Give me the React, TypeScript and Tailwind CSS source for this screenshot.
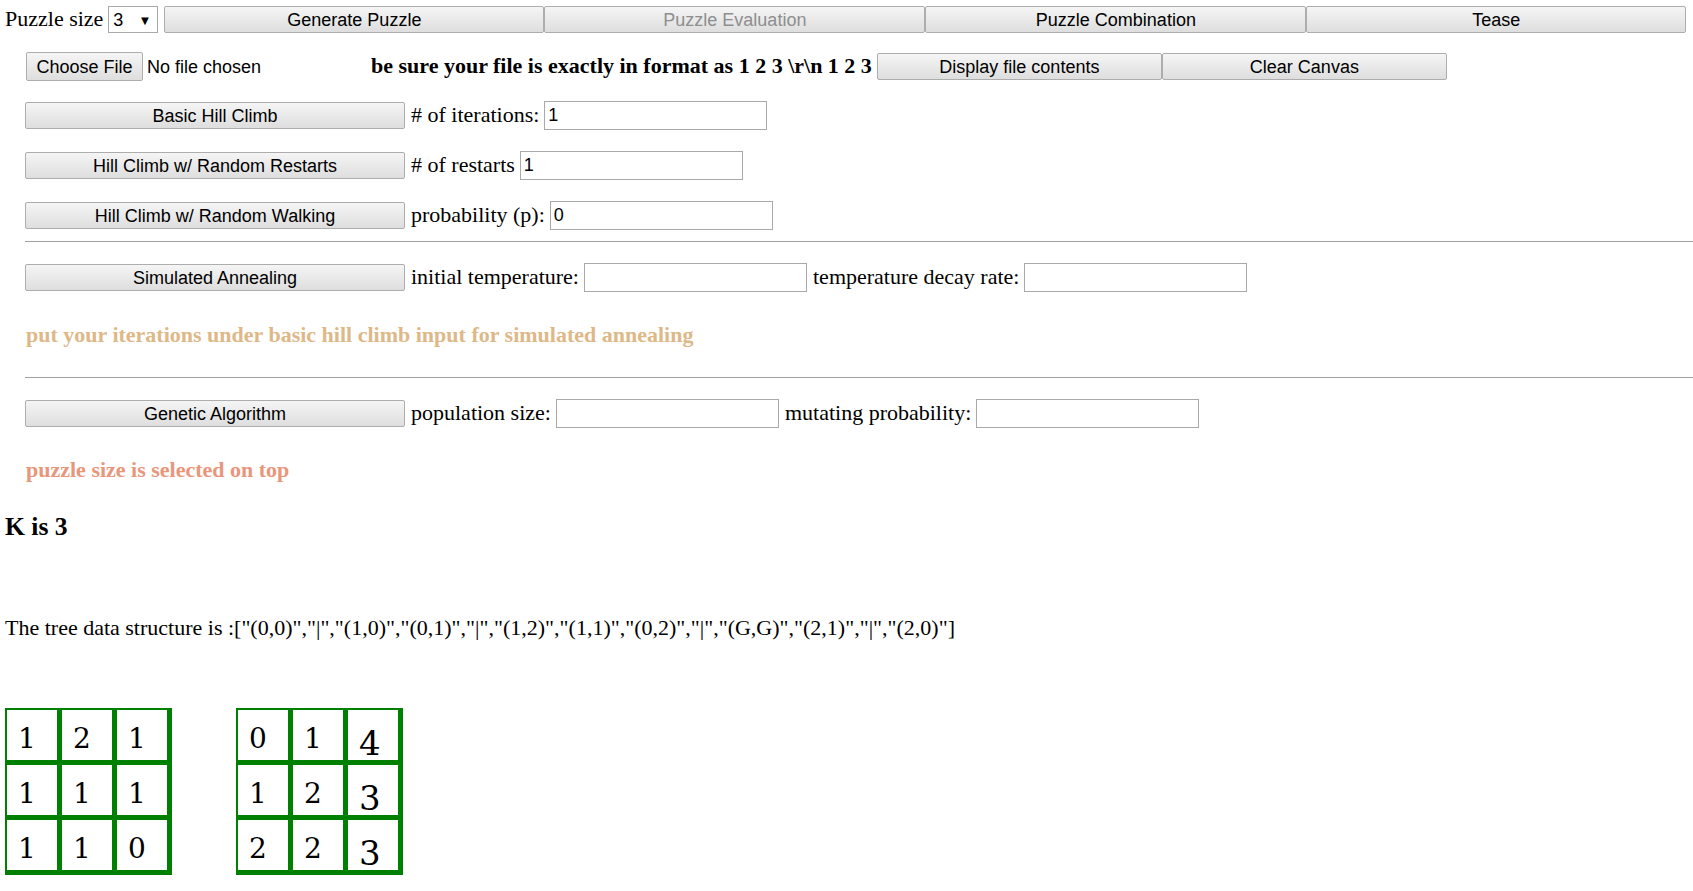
import React from "react";

const btn =
  "h-[27px] pt-[2px] border border-[#adadad] rounded-[2px] bg-gradient-to-b from-[#f5f5f5] to-[#dedede] font-['Liberation_Sans',Arial,sans-serif] text-[18px] leading-none flex items-center justify-center shrink-0";
const input =
  "w-[223px] h-[29px] border border-[#a9a9a9] bg-white px-[3px] font-['Liberation_Sans',Arial,sans-serif] text-[18px] text-black leading-none flex items-center shrink-0";

function Grid({ cells }: { cells: string[] }) {
  return (
    <div className="bg-[#008000] pl-[2px] pt-[2px] pr-[5px] pb-[5px] grid grid-cols-[50px_50px_50px] gap-[5px] w-fit">
      {cells.map((d, i) => {
        const tall = d === "3" || d === "4";
        return (
          <div key={i} className="w-[50px] h-[50px] bg-white relative">
            <span
              className={
                tall
                  ? "absolute left-[11px] top-[16px] text-[34px] leading-none font-['DejaVu_Serif',serif]"
                  : "absolute left-[11px] top-[15px] text-[28px] leading-none font-['DejaVu_Serif',serif]"
              }
            >
              {d}
            </span>
          </div>
        );
      })}
    </div>
  );
}

export default function App() {
  const tree =
    'The tree data structure is :["(0,0)","|","(1,0)","(0,1)","|","(1,2)","(1,1)","(0,2)","|","(G,G)","(2,1)","|","(2,0)"]';

  return (
    <div className="w-[1693px] h-[891px] overflow-hidden bg-white font-['Liberation_Serif','Times_New_Roman',serif] text-[22px] text-black leading-none">
      {/* top bar */}
      <div className="mt-[4px] h-[30px] pl-[5px] flex items-center">
        <span>Puzzle size</span>
        <div className="ml-[5px] w-[50px] h-[27px] pt-[2px] border border-[#a9a9a9] bg-white flex items-center justify-between px-[4px] font-['Liberation_Sans',Arial,sans-serif] text-[18px]">
          <span>3</span>
          <span className="text-[13px] mr-[2px]">▼</span>
        </div>
        <div className="ml-[6px] flex">
          <div className={`${btn} w-[380px] text-black`}>Generate Puzzle</div>
          <div className={`${btn} w-[381px] text-[#8e8e8e]`}>Puzzle Evaluation</div>
          <div className={`${btn} w-[381px] text-black`}>Puzzle Combination</div>
          <div className={`${btn} w-[380px] text-black`}>Tease</div>
        </div>
      </div>

      {/* file row */}
      <div className="mt-[17px] h-[30px] pl-[26px] flex items-center">
        <div className="w-[345px] flex items-center shrink-0">
          <div className={`${btn} h-[29px] w-[117px] text-black`}>Choose File</div>
          <span className="ml-[4px] pt-[2px] font-['Liberation_Sans',Arial,sans-serif] text-[18px]">No file chosen</span>
        </div>
        <span className="font-bold whitespace-nowrap">be sure your file is exactly in format as 1 2 3 \r\n 1 2 3</span>
        <div className="ml-[5px] flex">
          <div className={`${btn} w-[285px] text-black`}>Display file contents</div>
          <div className={`${btn} w-[285px] text-black`}>Clear Canvas</div>
        </div>
      </div>

      {/* hill climbs */}
      <div className="mt-[19px] h-[30px] pl-[25px] flex items-center">
        <div className={`${btn} w-[380px] text-black`}>Basic Hill Climb</div>
        <span className="ml-[6px]">#&nbsp;of iterations:</span>
        <div className={`${input} ml-[5px]`}>1</div>
      </div>
      <div className="mt-[20px] h-[30px] pl-[25px] flex items-center">
        <div className={`${btn} w-[380px] text-black`}>Hill Climb w/ Random Restarts</div>
        <span className="ml-[6px]">#&nbsp;of restarts</span>
        <div className={`${input} ml-[5px]`}>1</div>
      </div>
      <div className="mt-[20px] h-[30px] pl-[25px] flex items-center">
        <div className={`${btn} w-[380px] text-black`}>Hill Climb w/ Random Walking</div>
        <span className="ml-[6px]">probability (p):</span>
        <div className={`${input} ml-[5px]`}>0</div>
      </div>

      <div className="mt-[11px] ml-[25px] border-t border-[#a0a0a0]" />

      {/* annealing */}
      <div className="mt-[20px] h-[30px] pl-[25px] flex items-center">
        <div className={`${btn} w-[380px] text-black`}>Simulated Annealing</div>
        <span className="ml-[6px]">initial temperature:</span>
        <div className={`${input} ml-[5px]`} />
        <span className="ml-[6px]">temperature decay rate:</span>
        <div className={`${input} ml-[5px]`} />
      </div>
      <div className="mt-[28px] h-[30px] pl-[26px] flex items-center font-bold text-[#deb887]">
        put your iterations under basic hill climb input for simulated annealing
      </div>

      <div className="mt-[27px] ml-[25px] border-t border-[#a0a0a0]" />

      {/* genetic */}
      <div className="mt-[20px] h-[30px] pl-[25px] flex items-center">
        <div className={`${btn} w-[380px] text-black`}>Genetic Algorithm</div>
        <span className="ml-[6px]">population size:</span>
        <div className={`${input} ml-[5px]`} />
        <span className="ml-[6px]">mutating probability:</span>
        <div className={`${input} ml-[5px]`} />
      </div>
      <div className="mt-[27px] h-[30px] pl-[26px] flex items-center font-bold text-[#e9967a]">
        puzzle size is selected on top
      </div>

      <div className="mt-[27px] h-[30px] pl-[5px] flex items-center font-bold text-[25.6px]">K is 3</div>

      <div className="mt-[71px] h-[30px] pl-[5px] flex items-center whitespace-nowrap">{tree}</div>

      <div className="mt-[65px] pl-[5px] flex gap-[64px]">
        <Grid cells={["1", "2", "1", "1", "1", "1", "1", "1", "0"]} />
        <Grid cells={["0", "1", "4", "1", "2", "3", "2", "2", "3"]} />
      </div>
    </div>
  );
}
